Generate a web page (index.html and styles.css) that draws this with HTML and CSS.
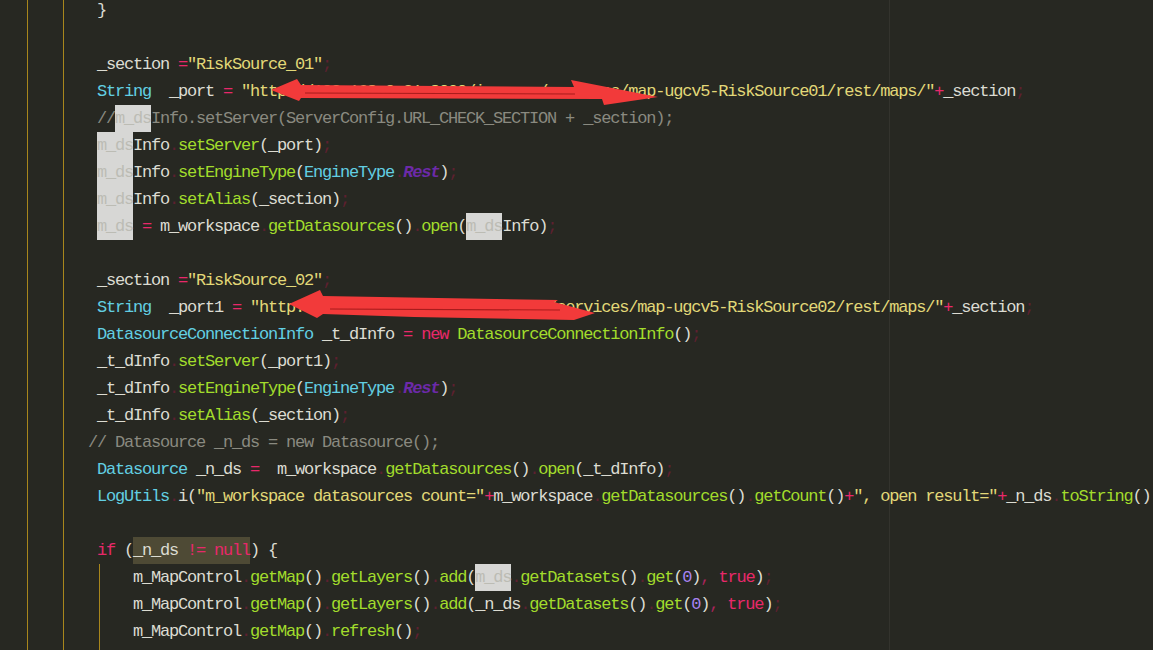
FILE: index.html
```html
<!DOCTYPE html>
<html>
<head>
<meta charset="utf-8">
<link rel="stylesheet" href="styles.css">
</head>
<body>
<div class="editor">
<div class="code">
<div class="ln">        }</div>
<div class="ln"> </div>
<div class="ln">        _section <span class="o">=</span><span class="s">"RiskSource_01"</span><span class="p">;</span></div>
<div class="ln">        <span class="t">String</span>  _port <span class="o">=</span> <span class="s">"http://192.168.0.21:8090/iserver/services/map-ugcv5-RiskSource01/rest/maps/"</span><span class="o">+</span>_section<span class="p">;</span></div>
<div class="ln">        <span class="c">//<span class="hl">m_ds</span>Info.setServer(ServerConfig.URL_CHECK_SECTION + _section);</span></div>
<div class="ln">        <span class="hl">m_ds</span>Info<span class="p">.</span><span class="f">setServer</span>(_port)<span class="p">;</span></div>
<div class="ln">        <span class="hl">m_ds</span>Info<span class="p">.</span><span class="f">setEngineType</span>(<span class="t">EngineType</span><span class="p">.</span><span class="st">Rest</span>)<span class="p">;</span></div>
<div class="ln">        <span class="hl">m_ds</span>Info<span class="p">.</span><span class="f">setAlias</span>(_section)<span class="p">;</span></div>
<div class="ln">        <span class="hl">m_ds</span> <span class="o">=</span> m_workspace<span class="p">.</span><span class="f">getDatasources</span>()<span class="p">.</span><span class="f">open</span>(<span class="hl">m_ds</span>Info)<span class="p">;</span></div>
<div class="ln"> </div>
<div class="ln">        _section <span class="o">=</span><span class="s">"RiskSource_02"</span><span class="p">;</span></div>
<div class="ln">        <span class="t">String</span>  _port1 <span class="o">=</span> <span class="s">"http://192.168.0.21:8090/iserver/services/map-ugcv5-RiskSource02/rest/maps/"</span><span class="o">+</span>_section<span class="p">;</span></div>
<div class="ln">        <span class="t">DatasourceConnectionInfo</span> _t_dInfo <span class="o">=</span> <span class="k">new</span> <span class="f">DatasourceConnectionInfo</span>()<span class="p">;</span></div>
<div class="ln">        _t_dInfo<span class="p">.</span><span class="f">setServer</span>(_port1)<span class="p">;</span></div>
<div class="ln">        _t_dInfo<span class="p">.</span><span class="f">setEngineType</span>(<span class="t">EngineType</span><span class="p">.</span><span class="st">Rest</span>)<span class="p">;</span></div>
<div class="ln">        _t_dInfo<span class="p">.</span><span class="f">setAlias</span>(_section)<span class="p">;</span></div>
<div class="ln">       <span class="c">// Datasource _n_ds = new Datasource();</span></div>
<div class="ln">        <span class="t">Datasource</span> _n_ds <span class="o">=</span>  m_workspace<span class="p">.</span><span class="f">getDatasources</span>()<span class="p">.</span><span class="f">open</span>(_t_dInfo)<span class="p">;</span></div>
<div class="ln">        <span class="t">LogUtils</span><span class="p">.</span>i(<span class="s">"m_workspace datasources count="</span><span class="o">+</span>m_workspace<span class="p">.</span><span class="f">getDatasources</span>()<span class="p">.</span><span class="f">getCount</span>()<span class="o">+</span><span class="s">", open result="</span><span class="o">+</span>_n_ds<span class="p">.</span><span class="f">toString</span>())<span class="p">;</span></div>
<div class="ln"> </div>
<div class="ln">        <span class="k">if</span> (<span class="hb">_n_ds <span class="o">!= null</span></span>) {</div>
<div class="ln blk">            m_MapControl<span class="p">.</span><span class="f">getMap</span>()<span class="p">.</span><span class="f">getLayers</span>()<span class="p">.</span><span class="f">add</span>(<span class="hl">m_ds</span><span class="p">.</span><span class="f">getDatasets</span>()<span class="p">.</span><span class="f">get</span>(<span class="n">0</span>)<span class="cm">,</span> <span class="k">true</span>)<span class="p">;</span></div>
<div class="ln blk">            m_MapControl<span class="p">.</span><span class="f">getMap</span>()<span class="p">.</span><span class="f">getLayers</span>()<span class="p">.</span><span class="f">add</span>(_n_ds<span class="p">.</span><span class="f">getDatasets</span>()<span class="p">.</span><span class="f">get</span>(<span class="n">0</span>)<span class="cm">,</span> <span class="k">true</span>)<span class="p">;</span></div>
<div class="ln blk">            m_MapControl<span class="p">.</span><span class="f">getMap</span>()<span class="p">.</span><span class="f">refresh</span>()<span class="p">;</span></div>
<div class="ln blk">            <span class="t">LogUtils</span><span class="p">.</span>i(<span class="s">"map refresh"</span>)<span class="p">;</span></div>
</div>
<svg class="marks" width="1153" height="650" viewBox="0 0 1153 650">
  <g fill="#f23a3a">
    <polygon points="271,90 297,79 301,85 574,87 571,80 658,97 604,105 602,99 301,98 299,101"/>
    <polygon points="289,304 320,290 323,296 558,300 554,302 595,313 574,320 414,317 323,314 317,318"/>
  </g>
  <g stroke="#a81c1c" stroke-width="1.2" fill="none">
    <line x1="330" y1="309" x2="560" y2="310"/>
    <line x1="305" y1="93" x2="575" y2="94"/>
  </g>
</svg>
</div>
</body>
</html>
```
FILE: styles.css
```css
html, body {
  margin: 0;
  padding: 0;
  background: #272822;
  overflow: hidden;
}

.editor {
  position: relative;
  width: 1153px;
  height: 650px;
  overflow: hidden;
  background-color: #272822;
  background-image:
    linear-gradient(#a8861c, #a8861c),
    linear-gradient(#a8861c, #a8861c),
    linear-gradient(#33332d, #33332d);
  background-size: 1px 100%, 1px 100%, 1px 100%;
  background-position: 27px 0, 63px 0, 889px 0;
  background-repeat: no-repeat;
}

.code {
  margin-top: -3px;
  padding-left: 25px;
  font-family: "Liberation Mono", "DejaVu Sans Mono", monospace;
  font-size: 17px;
  letter-spacing: -1.2px;
  color: #dcdcd2;
}

.ln {
  height: 27px;
  line-height: 27px;
  white-space: pre;
}

.blk {
  margin-left: -25px;
  padding-left: 25px;
  background-image: linear-gradient(#a8861c, #a8861c);
  background-size: 1px 100%;
  background-position: 99px 0;
  background-repeat: no-repeat;
}

.k { color: #e8286a; }
.o { color: #e8286a; }
.t { color: #62cfe2; }
.f { color: #a2dc2c; }
.s { color: #e2d878; }
.p { color: #5e2030; }
.cm { color: #a8245a; }
.n { color: #a984f0; }
.c { color: #8a8a80; }
.st { color: #6c2aa8; font-style: italic; font-weight: bold; }

.hl {
  display: inline-block;
  height: 27px;
  line-height: 27px;
  vertical-align: top;
  background: #d7d7d5;
  color: #bcbcb4;
}

.hb {
  display: inline-block;
  height: 27px;
  line-height: 27px;
  vertical-align: top;
  background: #4e4a35;
}

.marks {
  position: absolute;
  left: 0;
  top: 0;
  pointer-events: none;
}
```
